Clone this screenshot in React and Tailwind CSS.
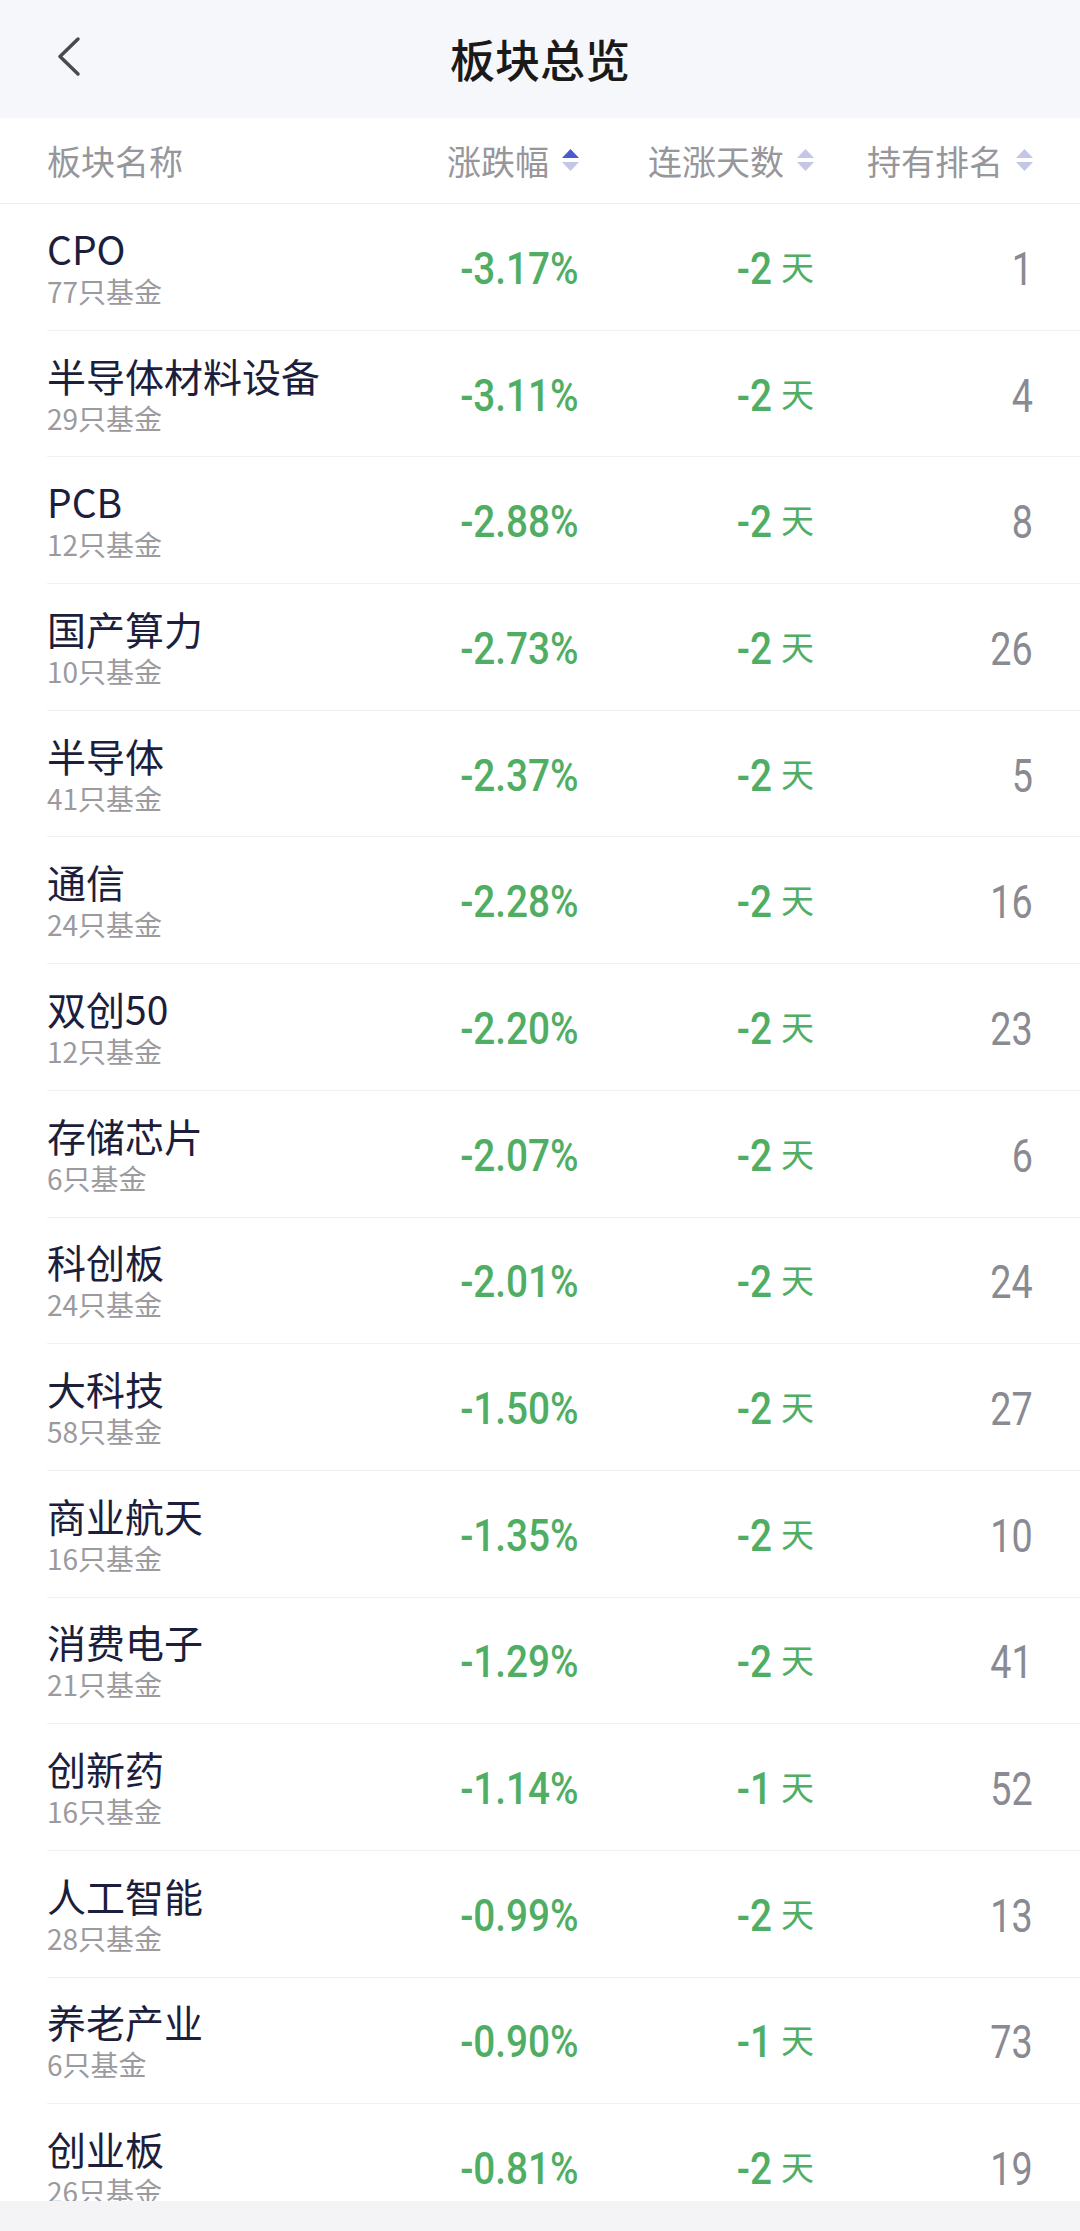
import React from 'react'

// 板块总览 — sector overview list, sorted by 涨跌幅
const ROWS = [
  { name: 'CPO', funds: 77, change: '-3.17%', streak: '-2', rank: 1 },
  { name: '半导体材料设备', funds: 29, change: '-3.11%', streak: '-2', rank: 4 },
  { name: 'PCB', funds: 12, change: '-2.88%', streak: '-2', rank: 8 },
  { name: '国产算力', funds: 10, change: '-2.73%', streak: '-2', rank: 26 },
  { name: '半导体', funds: 41, change: '-2.37%', streak: '-2', rank: 5 },
  { name: '通信', funds: 24, change: '-2.28%', streak: '-2', rank: 16 },
  { name: '双创50', funds: 12, change: '-2.20%', streak: '-2', rank: 23 },
  { name: '存储芯片', funds: 6, change: '-2.07%', streak: '-2', rank: 6 },
  { name: '科创板', funds: 24, change: '-2.01%', streak: '-2', rank: 24 },
  { name: '大科技', funds: 58, change: '-1.50%', streak: '-2', rank: 27 },
  { name: '商业航天', funds: 16, change: '-1.35%', streak: '-2', rank: 10 },
  { name: '消费电子', funds: 21, change: '-1.29%', streak: '-2', rank: 41 },
  { name: '创新药', funds: 16, change: '-1.14%', streak: '-1', rank: 52 },
  { name: '人工智能', funds: 28, change: '-0.99%', streak: '-2', rank: 13 },
  { name: '养老产业', funds: 6, change: '-0.90%', streak: '-1', rank: 73 },
  { name: '创业板', funds: 26, change: '-0.81%', streak: '-2', rank: 19 },
]

const CJK = "font-['Noto_Sans_CJK_SC','Noto_Sans',sans-serif]"
const NUM = "font-['Roboto','Liberation_Sans',sans-serif]"

function SortIcon({ active }) {
  return (
    <svg width="17" height="24" viewBox="0 0 17 24" className="shrink-0">
      <path d="M8.5 0 L17 9 L0 9 Z" fill={active ? '#4a5bd0' : '#c3c6e6'} />
      <path d="M0 13 L17 13 L8.5 22 Z" fill="#c3c6e6" />
    </svg>
  )
}

function HeadCell({ label, active, className }) {
  return (
    <div className={`flex items-center justify-end gap-[13px] ${className}`}>
      <span>{label}</span>
      <SortIcon active={active} />
    </div>
  )
}

export default function App() {
  return (
    <div className={`w-[1080px] h-[2231px] flex flex-col overflow-hidden bg-white ${CJK}`}>
      {/* Top bar */}
      <div className="relative h-[118px] shrink-0 flex items-center justify-center bg-[#f6f7fa]">
        <svg width="26" height="42" viewBox="0 0 26 42" className="absolute left-[56px] top-[36px]">
          <polyline points="22,3 4,20.5 22,38" fill="none" stroke="#4a4a4e" strokeWidth="3.5" strokeLinecap="round" strokeLinejoin="round" />
        </svg>
        <h1 className="text-[45px] leading-none font-medium text-[#1a1a1a] -mt-[1px]">板块总览</h1>
      </div>

      {/* Column header */}
      <div className="h-[86px] shrink-0 flex items-center border-b border-[#efeff2] pl-[47px] pr-[47px] text-[34px] leading-none text-[#96969b]">
        <div className="flex-1">板块名称</div>
        <HeadCell label="涨跌幅" active className="w-[200px]" />
        <HeadCell label="连涨天数" className="w-[235px]" />
        <HeadCell label="持有排名" className="w-[219px]" />
      </div>

      {/* List */}
      <div className="flex-1 overflow-hidden">
        {ROWS.map((r) => (
          <div key={r.name} className="ml-[47px] pr-[47px] h-[126.7px] flex items-center border-b border-[#f1f1f4]">
            <div className="flex-1 flex flex-col justify-center">
              <span className="text-[39px] leading-[43px] text-[#1c1e3c]">{r.name}</span>
              <span className="mt-[5px] text-[28px] leading-[32px] text-[#9a9a9f]">{r.funds}只基金</span>
            </div>
            <div className="w-[200px] flex justify-end pt-[4px]">
              <span className={`inline-block origin-right scale-x-[0.88] text-[44px] leading-none font-medium text-[#4fae63] ${NUM}`}>{r.change}</span>
            </div>
            <div className="w-[235px] flex justify-end items-center gap-[9px] pt-[4px]">
              <span className={`inline-block origin-right scale-x-[0.88] text-[44px] leading-none font-medium text-[#4fae63] ${NUM}`}>{r.streak}</span>
              <span className="text-[33px] leading-none text-[#4fae63] -mt-[5px]">天</span>
            </div>
            <div className="w-[219px] flex justify-end pt-[4px]">
              <span className={`inline-block origin-right scale-x-[0.82] text-[46px] leading-none text-[#8a8a92] ${NUM}`}>{r.rank}</span>
            </div>
          </div>
        ))}
      </div>

      {/* Bottom strip */}
      <div className="h-[30px] shrink-0 bg-[#f4f4f6]" />
    </div>
  )
}
